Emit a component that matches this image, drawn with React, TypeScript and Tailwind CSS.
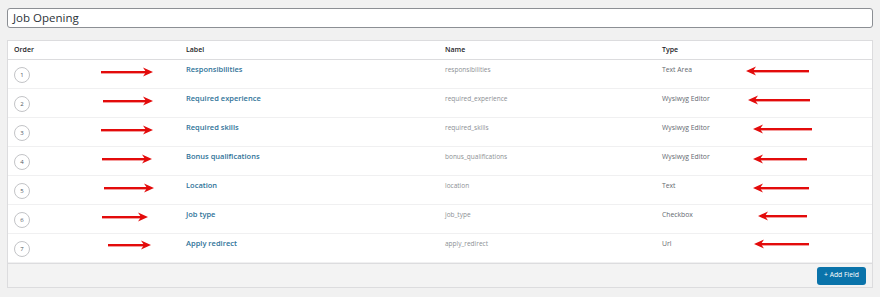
import React from 'react';

type Field = {
  order: number;
  label: string;
  name: string;
  type: string;
  // annotation arrows (x of start/end inside the row, y center)
  r: [number, number, number];
  l: [number, number, number];
};

const fields: Field[] = [
  { order: 1, label: 'Responsibilities', name: 'responsibilities', type: 'Text Area', r: [93, 145, 12], l: [738, 801, 11] },
  { order: 2, label: 'Required experience', name: 'required_experience', type: 'Wysiwyg Editor', r: [95, 145, 12], l: [740, 802, 11] },
  { order: 3, label: 'Required skills', name: 'required_skills', type: 'Wysiwyg Editor', r: [93, 145, 12], l: [745, 804, 11] },
  { order: 4, label: 'Bonus qualifications', name: 'bonus_qualifications', type: 'Wysiwyg Editor', r: [94, 144, 12], l: [745, 799, 12] },
  { order: 5, label: 'Location', name: 'location', type: 'Text', r: [96, 146, 12], l: [745, 801, 12] },
  { order: 6, label: 'Job type', name: 'job_type', type: 'Checkbox', r: [94, 140, 12], l: [750, 799, 11] },
  { order: 7, label: 'Apply redirect', name: 'apply_redirect', type: 'Url', r: [100, 143, 11], l: [746, 801, 10] },
];

const RightArrow = ({ x1, x2, y }: { x1: number; x2: number; y: number }) => (
  <svg
    className="absolute pointer-events-none"
    style={{ left: x1, top: y - 5, width: x2 - x1, height: 10 }}
    viewBox={`0 0 ${x2 - x1} 10`}
  >
    <rect x="0" y="4" width={x2 - x1 - 6} height="2.4" fill="#e30b0b" />
    <path d={`M${x2 - x1 - 10} 0.5 L${x2 - x1} 5 L${x2 - x1 - 10} 9.5 L${x2 - x1 - 7} 5 Z`} fill="#e30b0b" />
  </svg>
);

const LeftArrow = ({ x1, x2, y }: { x1: number; x2: number; y: number }) => (
  <svg
    className="absolute pointer-events-none"
    style={{ left: x1, top: y - 5, width: x2 - x1, height: 10 }}
    viewBox={`0 0 ${x2 - x1} 10`}
  >
    <rect x="6" y="4" width={x2 - x1 - 6} height="2.4" fill="#e30b0b" />
    <path d="M10 0.5 L0 5 L10 9.5 L7 5 Z" fill="#e30b0b" />
  </svg>
);

export default function App() {
  return (
    <div
      className="w-[880px] h-[297px] bg-[#f1f1f1] pt-2 px-[7px] overflow-hidden"
      style={{ fontFamily: '"Open Sans", "Noto Sans", "Liberation Sans", sans-serif' }}
    >
      <div className="h-[20px] border border-[#8c8f94] rounded-[3px] bg-white flex items-center pl-[5px] text-[11.5px] text-[#2c3338] leading-none">
        Job Opening
      </div>

      <div className="mt-[12px] bg-white border border-[#dcdcde]">
        {/* header */}
        <div className="grid grid-cols-[172px_259px_217px_1fr] h-[19px] items-center border-b border-[#dcdcde] px-[6px] text-[7px] font-semibold text-[#1d2327]">
          <div>Order</div>
          <div>Label</div>
          <div>Name</div>
          <div>Type</div>
        </div>

        {fields.map((f) => (
          <div
            key={f.order}
            className="relative grid grid-cols-[172px_259px_217px_1fr] h-[29px] border-b border-[#f0f0f1] px-[6px] text-[7px]"
          >
            <div className="flex items-start pt-[7px]">
              <div className="w-[16px] h-[16px] rounded-full border border-[#c3c4c7] flex items-center justify-center text-[6px] text-[#50575e]">
                {f.order}
              </div>
            </div>
            <div className="pt-[4px] font-semibold text-[#2f7399] text-[7.5px]">{f.label}</div>
            <div className="pt-[5px] text-[#8c8f94] text-[6.5px]">{f.name}</div>
            <div className="pt-[5px] text-[#646970] text-[6.8px]">{f.type}</div>
            <RightArrow x1={f.r[0]} x2={f.r[1]} y={f.r[2]} />
            <LeftArrow x1={f.l[0]} x2={f.l[1]} y={f.l[2]} />
          </div>
        ))}

        {/* footer */}
        <div className="h-[24px] bg-[#f3f3f3] border-t border-[#dcdcde] flex items-center justify-end pr-[6px]">
          <button className="h-[18px] w-[49px] rounded-[3px] bg-[#0a73aa] text-white text-[6.8px] leading-none">
            + Add Field
          </button>
        </div>
      </div>
    </div>
  );
}
